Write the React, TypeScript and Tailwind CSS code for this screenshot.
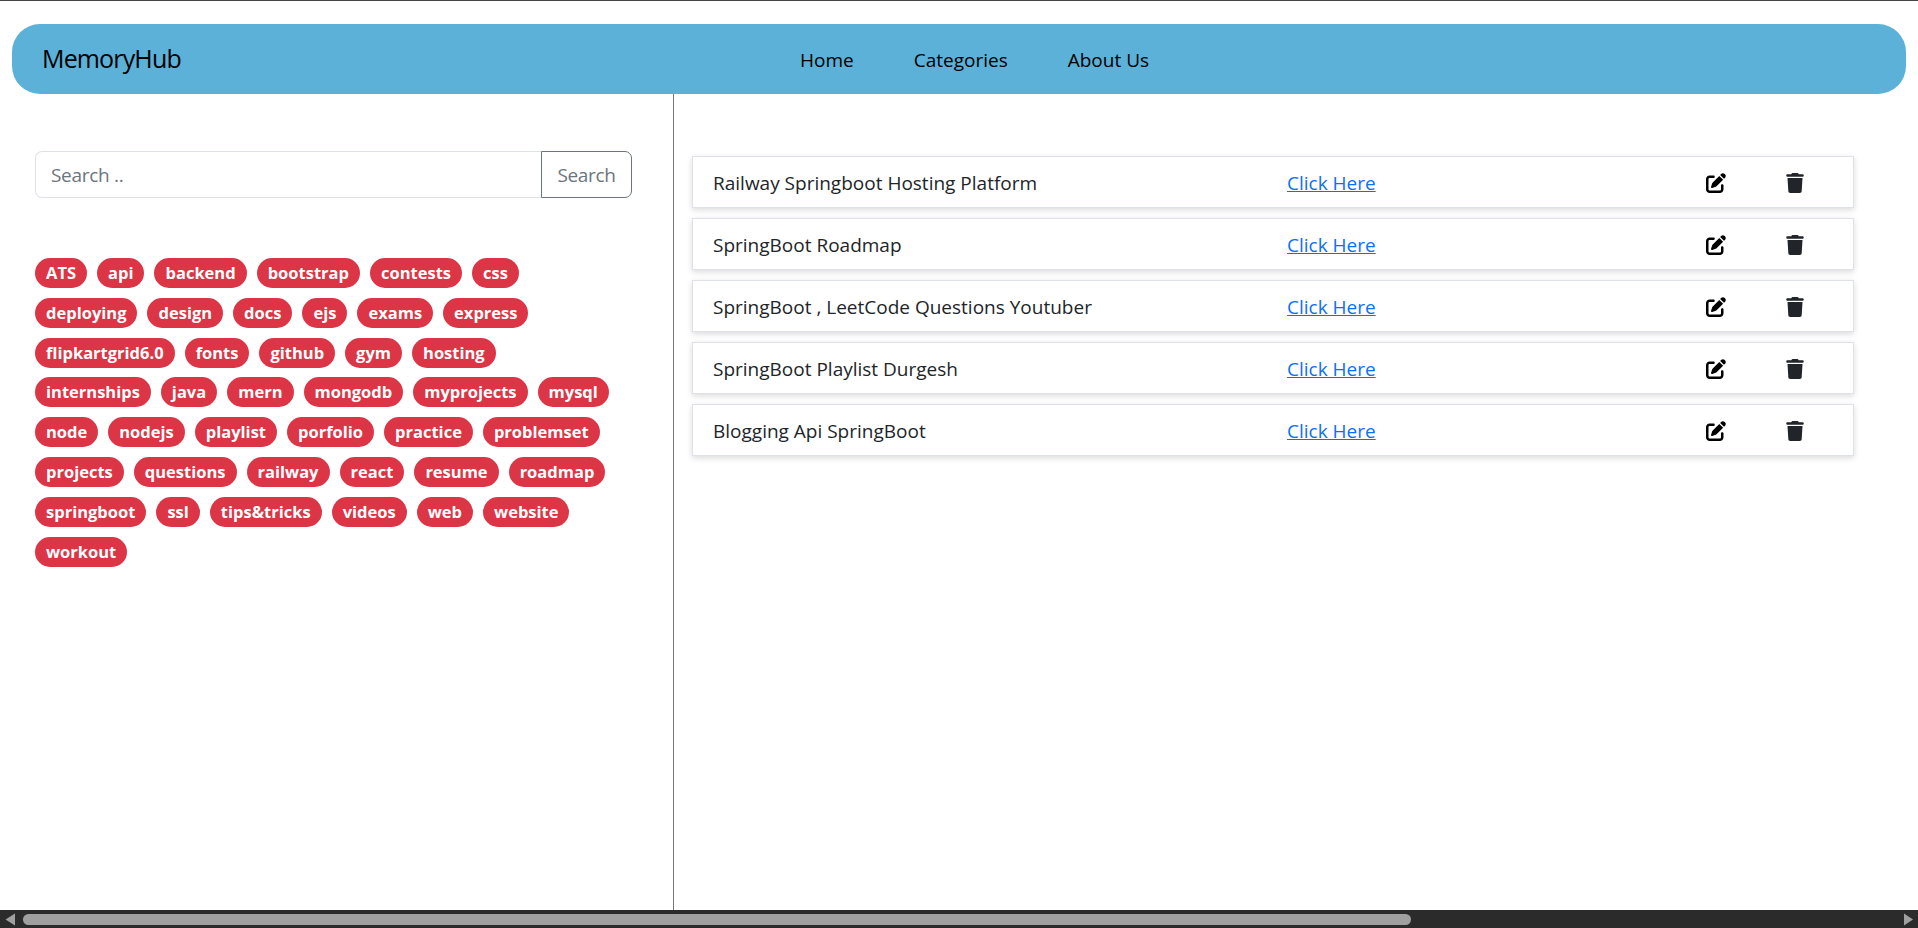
import { FaPenToSquare, FaTrash } from "react-icons/fa6";

const tags = [
  "ATS", "api", "backend", "bootstrap", "contests", "css",
  "deploying", "design", "docs", "ejs", "exams", "express",
  "flipkartgrid6.0", "fonts", "github", "gym", "hosting",
  "internships", "java", "mern", "mongodb", "myprojects", "mysql",
  "node", "nodejs", "playlist", "porfolio", "practice", "problemset",
  "projects", "questions", "railway", "react", "resume", "roadmap",
  "springboot", "ssl", "tips&tricks", "videos", "web", "website",
  "workout",
];

const links = [
  "Railway Springboot Hosting Platform",
  "SpringBoot Roadmap",
  "SpringBoot , LeetCode Questions Youtuber",
  "SpringBoot Playlist Durgesh",
  "Blogging Api SpringBoot",
];

function Navbar() {
  return (
    <div className="mx-3 mt-[23px] h-[70px] shrink-0 rounded-[28px] bg-[#5bb1d7] flex items-center text-black">
      <div className="w-[788px] pl-[30px] text-[25px] tracking-[-0.85px]">MemoryHub</div>
      <div className="flex gap-[60px] pt-[2px] text-[19px]">
        <span>Home</span>
        <span>Categories</span>
        <span>About Us</span>
      </div>
    </div>
  );
}

function Sidebar() {
  return (
    <div className="w-[674px] shrink-0 border-r border-[#777777] pl-[35px] pr-[41px] pt-[57px]">
      <div className="flex h-[47px]">
        <input
          placeholder="Search .."
          className="flex-1 min-w-0 rounded-l-[7px] border border-r-0 border-[#dee2e6] pl-[15px] pt-[2px] text-[19px] tracking-[-0.3px] outline-none placeholder:text-[#6c757d]"
        />
        <button className="w-[91px] rounded-r-[7px] border border-[#6c757d] pt-[2px] text-[19px] tracking-[-0.35px] text-[#6c757d]">
          Search
        </button>
      </div>
      <div className="mt-[60px] mr-[14px] flex flex-wrap gap-x-[10px] gap-y-[9.8px]">
        {tags.map((tag) => (
          <span
            key={tag}
            className="h-[30px] rounded-[15px] bg-[#dc3545] px-[11px] text-[16.5px] leading-[29px] font-bold text-white"
          >
            {tag}
          </span>
        ))}
      </div>
    </div>
  );
}

function LinkRow({ title }: { title: string }) {
  return (
    <div className="flex h-[52px] items-center border border-[#dee2e6] bg-white pl-5 text-[19px] text-[#212529] shadow-[0_2px_6px_rgba(0,0,0,0.15)]">
      <div className="w-[574px] pt-[3px]">{title}</div>
      <a href="#" className="w-[419px] pt-[3px] text-[#0d6efd] underline">
        Click Here
      </a>
      <FaPenToSquare className="mt-[1px] w-[20px] h-[20px] text-black" />
      <FaTrash className="mt-[1px] ml-[60px] w-[18px] h-[20px] text-[#212529]" />
    </div>
  );
}

export default function App() {
  return (
    <div className="h-[928px] w-full overflow-hidden flex flex-col bg-white border-t border-[#444444] font-['Open_Sans',sans-serif]">
      <Navbar />
      <div className="flex flex-1 min-h-0">
        <Sidebar />
        <div className="flex-1 pl-[18px] pr-[64px] pt-[62px] flex flex-col gap-[10px]">
          {links.map((title) => (
            <LinkRow key={title} title={title} />
          ))}
        </div>
      </div>
      <div className="h-[18px] shrink-0 bg-[#2b2b2b] flex items-center">
        <svg width="23" height="18" viewBox="0 0 23 18" className="shrink-0">
          <path d="M15 3.5V15.5L5.5 9.5Z" fill="#a0a0a0" />
        </svg>
        <div className="h-[11px] w-[1388px] rounded-full bg-[#a0a0a0]" />
        <svg width="18" height="18" viewBox="0 0 18 18" className="ml-auto mr-[1px] shrink-0">
          <path d="M5 3.5V15.5L14 9.5Z" fill="#a0a0a0" />
        </svg>
      </div>
    </div>
  );
}
